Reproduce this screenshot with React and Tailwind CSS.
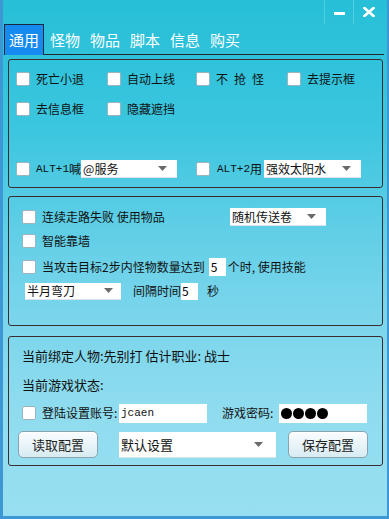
import React from 'react';

const cjk = { fontFamily: '"Noto Sans CJK SC", "Noto Sans", sans-serif' };
const mono = { fontFamily: '"Liberation Mono", "DejaVu Sans Mono", monospace' };

const Box = () => (
  <span className="inline-block w-[14px] h-[14px] shrink-0 bg-white border border-[#9fb3bd] rounded-[2px]" />
);

const Check = ({ label, w }) => (
  <div className={`flex items-center h-[20px] ${w}`}>
    <Box />
    <span className="ml-[6px] text-[12px] leading-none text-[#111]">{label}</span>
  </div>
);

const Arrow = () => (
  <svg width="9" height="5" viewBox="0 0 9 5" className="shrink-0">
    <path d="M0 0h9L4.5 5z" fill="#6b6b6b" />
  </svg>
);

const Select = ({ value, w, h = 'h-[18px]', text = 'text-[12px]', pr = 'pr-[10px]' }) => (
  <div className={`flex items-center justify-between bg-white ${w} ${h} pl-[2px] ${pr} border-b border-[#d8e4ea]`}>
    <span className={`${text} leading-none text-[#111]`}>{value}</span>
    <Arrow />
  </div>
);

const Btn = ({ label }) => (
  <div className="flex items-center justify-center w-[80px] h-[27px] rounded-[5px] border border-[#8aa3ae] bg-gradient-to-b from-[#fbfdfe] to-[#d7ebf3] text-[13px] text-[#222] shadow-[inset_0_1px_0_#ffffff]">
    {label}
  </div>
);

const Group = ({ className, children }) => (
  <div className={`ml-[5px] w-[375px] border border-[#3a2c30] rounded-[3px] ${className}`}>{children}</div>
);

export default function App() {
  return (
    <div
      className="w-[389px] h-[519px] overflow-hidden flex flex-col border-l-[3px] border-r-[2px] border-b-[3px] border-[#3d97d4] bg-[linear-gradient(to_bottom,#26bfd7_0%,#3cc6df_25%,#72d3ea_55%,#90dcef_80%,#97dff1_100%)]"
      style={cjk}
    >
      {/* title bar */}
      <div className="h-[24px] flex justify-end items-stretch pr-[4px]">
        <div className="w-[29px] border-l border-[#52cfe2] flex items-center justify-center">
          <span className="block w-[11px] h-[3px] bg-white mt-[3px]" />
        </div>
        <div className="w-[30px] border-l border-[#52cfe2] flex items-center justify-center">
          <svg width="12" height="10" viewBox="0 0 12 10">
            <path d="M1.5 1l9 8M10.5 1l-9 8" stroke="#fff" strokeWidth="2.6" strokeLinecap="square" />
          </svg>
        </div>
      </div>

      {/* tabs */}
      <div className="h-[31px] flex items-end">
        <div className="w-[1px]" />
        <div className="w-[40px] h-[31px] bg-[#168bef] border border-b-0 border-[#1a2a3a] flex items-center justify-center text-[15px] text-white">
          通用
        </div>
        <div className="flex-1 h-[31px] border-b border-[#1f2a33] flex items-center mr-[3px]">
          {['怪物', '物品', '脚本', '信息', '购买'].map((t) => (
            <span key={t} className="w-[40px] pl-[6px] text-[15px] text-white leading-none">{t}</span>
          ))}
        </div>
      </div>

      {/* group 1 */}
      <Group className="mt-[4px] h-[129px] pl-[7px] pt-[9px]">
        <div className="flex">
          <Check label="死亡小退" w="w-[91px]" />
          <Check label="自动上线" w="w-[89px]" />
          <div className="flex items-center h-[20px] w-[91px]">
            <Box />
            <span className="ml-[6px] flex gap-[6px] text-[12px] leading-none text-[#111]">
              <span>不</span><span>抢</span><span>怪</span>
            </span>
          </div>
          <Check label="去提示框" />
        </div>
        <div className="flex mt-[10px]">
          <Check label="去信息框" w="w-[91px]" />
          <Check label="隐藏遮挡" w="w-[89px]" />
        </div>
        <div className="flex mt-[40px] items-center h-[20px]">
          <div className="flex items-center w-[180px]">
            <Box />
            <span className="ml-[6px] text-[11px] text-[#111]" style={mono}>ALT+1</span>
            <span className="text-[12px] text-[#111]">喊</span>
            <Select value="@服务" w="w-[96px]" />
          </div>
          <div className="flex items-center">
            <Box />
            <span className="ml-[7px] text-[11px] text-[#111]" style={mono}>ALT+2</span>
            <span className="text-[12px] text-[#111]">用</span>
            <span className="w-[2px]" />
            <Select value="强效太阳水" w="w-[97px]" />
          </div>
        </div>
      </Group>

      {/* group 2 */}
      <Group className="mt-[8px] h-[130px] pl-[13px] pt-[10px]">
        <div className="flex items-center h-[20px]">
          <Box />
          <span className="ml-[6px] w-[188px] text-[12px] text-[#111]">连续走路失败 使用物品</span>
          <Select value="随机传送卷" w="w-[96px]" />
        </div>
        <div className="flex items-center h-[20px] mt-[4px]">
          <Box />
          <span className="ml-[6px] text-[12px] text-[#111]">智能靠墙</span>
        </div>
        <div className="flex items-center h-[20px] mt-[6px]">
          <Box />
          <span className="ml-[6px] text-[12px] text-[#111]">当攻击目标2步内怪物数量达到</span>
          <span className="ml-[4px] w-[17px] h-[18px] bg-white flex items-center pl-[2px] text-[12px]">5</span>
          <span className="ml-[2px] text-[12px] text-[#111]">个时, 使用技能</span>
        </div>
        <div className="flex items-center h-[20px] mt-[4px] ml-[3px]">
          <Select value="半月弯刀" w="w-[96px]" h="h-[17px]" pr="pr-[8px]" />
          <span className="ml-[12px] text-[12px] text-[#111]">间隔时间</span>
          <span className="w-[17px] h-[17px] bg-white flex items-center pl-[1px] text-[12px]">5</span>
          <span className="ml-[9px] text-[12px] text-[#111]">秒</span>
        </div>
      </Group>

      {/* group 3 */}
      <Group className="mt-[10px] h-[130px] pl-[13px] pt-[9px]">
        <div className="h-[20px] flex items-center text-[13px] text-[#111]">当前绑定人物:先别打 估计职业: 战士</div>
        <div className="h-[20px] flex items-center mt-[9px] text-[13px] text-[#111]">当前游戏状态:</div>
        <div className="flex items-center h-[20px] mt-[8px]">
          <Box />
          <span className="ml-[6px] w-[77px] text-[12px] text-[#111] whitespace-nowrap">登陆设置账号:</span>
          <div className="w-[88px] h-[19px] bg-white flex items-center pl-[2px] text-[11px] text-[#111]" style={mono}>jcaen</div>
          <span className="ml-[15px] w-[57px] text-[12px] text-[#111]">游戏密码:</span>
          <div className="w-[88px] h-[19px] bg-white flex items-center pl-[2px] gap-[1px]">
            {[0, 1, 2, 3].map((i) => (
              <span key={i} className="block w-[11px] h-[11px] rounded-full bg-black" />
            ))}
          </div>
        </div>
        <div className="flex items-center mt-[8px] -ml-[4px]">
          <Btn label="读取配置" />
          <div className="ml-[21px]">
            <Select value="默认设置" w="w-[157px]" h="h-[26px]" text="text-[13px]" pr="pr-[13px]" />
          </div>
          <div className="ml-[12px]">
            <Btn label="保存配置" />
          </div>
        </div>
      </Group>
    </div>
  );
}
